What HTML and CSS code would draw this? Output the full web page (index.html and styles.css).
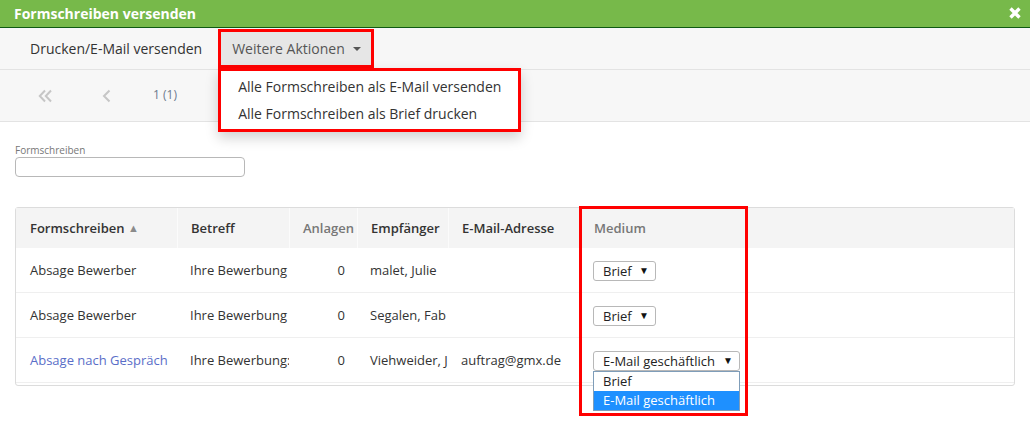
FILE: index.html
```html
<!DOCTYPE html>
<html lang="de">
<head>
<meta charset="utf-8">
<title>Formschreiben versenden</title>
<link rel="stylesheet" href="styles.css">
</head>
<body>
<div class="dialog">
  <div class="titlebar">
    <span class="title">Formschreiben versenden</span>
    <svg class="close" width="14" height="14" viewBox="0 0 14 14"><path d="M2.5 2.5 L11.5 11.5 M11.5 2.5 L2.5 11.5" stroke="#fff" stroke-width="3.4" fill="none"/></svg>
  </div>
  <div class="toolbar">
    <span class="tool">Drucken/E-Mail versenden</span>
    <div class="tool-menu">
      <span class="tool-btn">Weitere Aktionen <span class="caret"></span></span>
      <ul class="menu">
        <li>Alle Formschreiben als E-Mail versenden</li>
        <li>Alle Formschreiben als Brief drucken</li>
      </ul>
    </div>
  </div>
  <div class="pager">
    <svg class="pg-first" width="15" height="14" viewBox="0 0 15 14"><path d="M7 1.5 L1.8 7 L7 12.5 M13 1.5 L7.8 7 L13 12.5" stroke="#c6c6c6" stroke-width="2" fill="none"/></svg>
    <svg class="pg-prev" width="9" height="14" viewBox="0 0 9 14"><path d="M7.5 1.5 L2 7 L7.5 12.5" stroke="#c6c6c6" stroke-width="2" fill="none"/></svg>
    <span class="pg-num">1 (1)</span>
  </div>
  <div class="content">
    <label class="field-label">Formschreiben</label>
    <div class="field-input"></div>
    <div class="table-wrap">
      <table class="grid">
        <colgroup>
          <col class="c1"><col class="c2"><col class="c3"><col class="c4"><col class="c5"><col class="c6"><col>
        </colgroup>
        <thead>
          <tr>
            <th>Formschreiben <span class="sort">▲</span></th>
            <th>Betreff</th>
            <th class="muted">Anlagen</th>
            <th>Empfänger</th>
            <th>E-Mail-Adresse</th>
            <th class="muted">Medium</th>
            <th></th>
          </tr>
        </thead>
        <tbody>
          <tr>
            <td>Absage Bewerber</td>
            <td class="clip">Ihre Bewerbung</td>
            <td class="num">0</td>
            <td class="clip">malet, Julie</td>
            <td></td>
            <td><div class="sel sel-short">Brief<span class="arr">▼</span></div></td>
            <td></td>
          </tr>
          <tr>
            <td>Absage Bewerber</td>
            <td class="clip">Ihre Bewerbung</td>
            <td class="num">0</td>
            <td class="clip">Segalen, Fab</td>
            <td></td>
            <td><div class="sel sel-short">Brief<span class="arr">▼</span></div></td>
            <td></td>
          </tr>
          <tr>
            <td><span class="link">Absage nach Gespräch</span></td>
            <td class="clip">Ihre Bewerbung:</td>
            <td class="num">0</td>
            <td class="clip">Viehweider, J</td>
            <td>auftrag@gmx.de</td>
            <td class="open">
              <div class="sel sel-long">E-Mail geschäftlich<span class="arr">▼</span>
                <ul class="options">
                  <li>Brief</li>
                  <li class="hl">E-Mail geschäftlich</li>
                </ul>
              </div>
            </td>
            <td></td>
          </tr>
        </tbody>
      </table>
      <div class="mark"></div>
    </div>
  </div>
</div>
</body>
</html>
```
FILE: styles.css
```css
* { box-sizing: border-box; }
html, body { margin: 0; padding: 0; background: #fff; }
body { font-family: "Open Sans", "Noto Sans", sans-serif; color: #333; font-size: 13px; min-height: 425px; }
.dialog { min-height: 425px; }

.titlebar {
  height: 28px;
  background: #77b94a;
  border-bottom: 1px solid #0f5a14;
  display: flex;
  align-items: center;
  justify-content: space-between;
  padding: 0 8px 0 14px;
}
.title { color: #fff; font-weight: 700; font-size: 14px; }
.close { display: block; margin-top: -1px; }

.toolbar {
  height: 42px;
  background: #f7f7f7;
  border-bottom: 1px solid #e3e3e3;
  display: flex;
  align-items: stretch;
  padding-left: 15px;
}
.tool {
  display: flex;
  align-items: center;
  padding: 0 16px 0 15px;
  font-size: 14px;
  color: #333;
}
.tool-menu { position: relative; display: flex; margin-top: 1px; margin-bottom: 1px; }
.tool-btn {
  display: flex;
  align-items: center;
  border: 3px solid #ff0000;
  background: #e6e6e6;
  padding: 0 10px 0 11px;
  font-size: 14px;
  color: #555;
}
.caret {
  display: inline-block;
  width: 0; height: 0;
  margin-left: 8px;
  border-left: 4px solid transparent;
  border-right: 4px solid transparent;
  border-top: 4px solid #555;
}
.menu {
  position: absolute;
  top: 100%;
  left: 0;
  width: 303px;
  margin: 0;
  padding: 2px 0;
  list-style: none;
  background: #fff;
  border: 3px solid #ff0000;
  box-shadow: 0 6px 12px rgba(0,0,0,0.18);
  z-index: 5;
}
.menu li {
  font-size: 14px;
  line-height: 27px;
  padding-left: 17px;
  color: #333;
  white-space: nowrap;
}

.pager {
  height: 52px;
  background: #f7f7f7;
  border-bottom: 1px solid #e3e3e3;
  display: flex;
  align-items: center;
  padding-left: 38px;
}
.pg-first { display: block; }
.pg-prev { display: block; margin-left: 49px; }
.pg-num { margin-left: 42px; font-size: 12px; color: #6c7a8e; margin-top: -2px; }

.content { padding: 21px 15px 0 15px; }
.field-label { display: block; font-size: 10px; line-height: 14px; color: #777; }
.field-input {
  width: 230px;
  height: 20px;
  border: 1px solid #b8b8b8;
  border-radius: 4px;
  background: #fff;
}

.table-wrap {
  position: relative;
  margin-top: 30px;
  border: 1px solid #dcdcdc;
  border-radius: 3px;
  padding-bottom: 2px;
}
.grid {
  width: 100%;
  border-collapse: separate;
  border-spacing: 0;
  table-layout: fixed;
}
.c1 { width: 161px; }
.c2 { width: 112px; }
.c3 { width: 68px; }
.c4 { width: 91px; }
.c5 { width: 132px; }
.c6 { width: 165px; }
.grid th {
  height: 40px;
  background: #f4f4f4;
  text-align: left;
  font-weight: 600;
  font-size: 13px;
  color: #333;
  padding: 0 0 0 13px;
  border-left: 1px solid #fbfbfb;
  white-space: nowrap;
  overflow: hidden;
}
.grid th:first-child { border-left: 0; padding-left: 14px; }
.grid th.muted { color: #777; }
.sort { font-size: 11px; color: #8a8a8a; vertical-align: 1px; }
.grid td {
  height: 45px;
  border-bottom: 1px solid #efefef;
  padding: 0 0 0 13px;
  white-space: nowrap;
  overflow: hidden;
  vertical-align: middle;
}
.grid td:first-child { padding-left: 14px; }
.grid td.clip { padding-right: 0; text-overflow: clip; }
.grid td.num { text-align: right; padding-right: 12px; padding-left: 0; }
.grid td.open { overflow: visible; position: relative; }
.link { color: #5a6ec8; }

.sel {
  position: relative;
  display: flex;
  align-items: center;
  justify-content: space-between;
  height: 20px;
  margin-top: 2px;
  border: 1px solid #b8b8b8;
  border-radius: 3px;
  padding: 0 6px 0 9px;
  font-size: 13px;
  color: #222;
  background: #fff;
}
.sel-short { width: 63px; }
.sel-long { width: 147px; }
.arr { font-size: 10px; color: #111; margin-top: -3px; }
.options {
  position: absolute;
  top: 19px;
  left: -1px;
  width: 147px;
  margin: 0;
  padding: 0;
  list-style: none;
  background: #fff;
  border: 1px solid #7f9db9;
  z-index: 4;
}
.options li {
  height: 19px;
  line-height: 19px;
  padding-left: 9px;
  font-size: 13px;
  color: #222;
}
.options li.hl { background: #1e90ff; color: #fff; }

.mark {
  position: absolute;
  left: 563px;
  top: -2px;
  width: 169px;
  height: 210px;
  border: 3px solid #ff0000;
  pointer-events: none;
  z-index: 6;
}
```
